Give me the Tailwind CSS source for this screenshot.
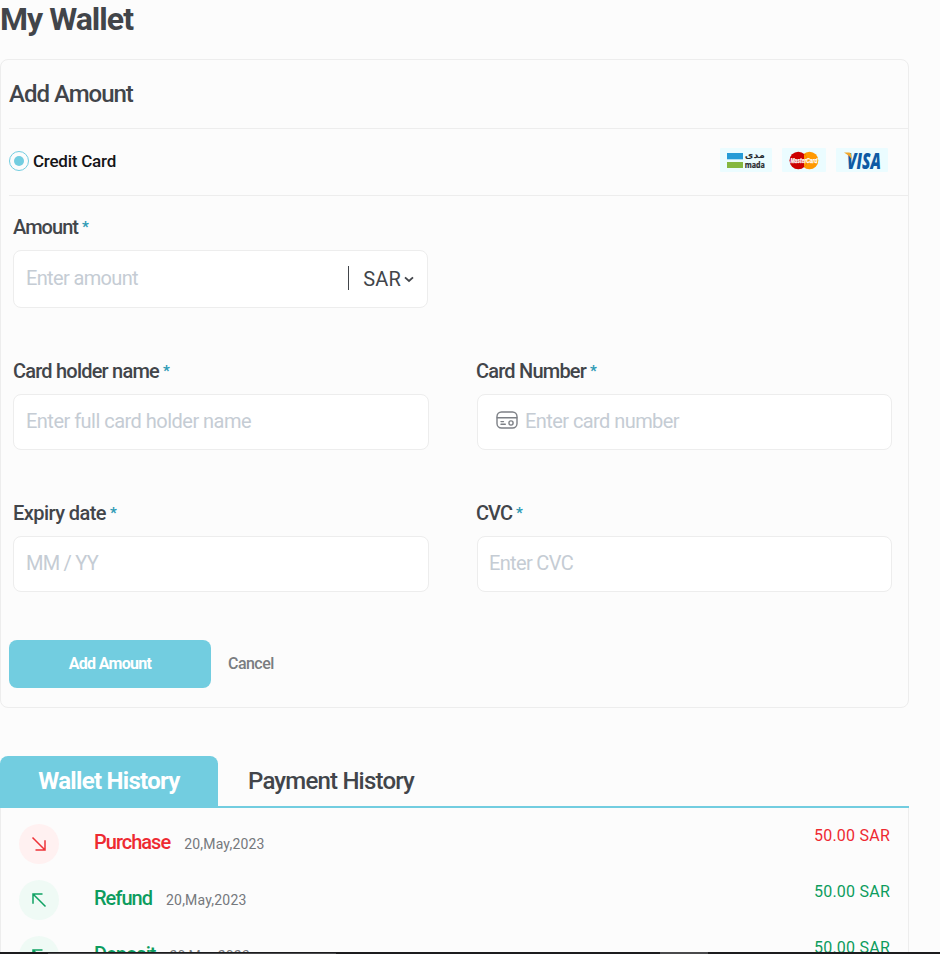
<!DOCTYPE html>
<html lang="en">
<head>
<meta charset="utf-8">
<title>My Wallet</title>
<script src="https://cdn.jsdelivr.net/npm/@tailwindcss/browser@4"></script>
</head>
<body class="bg-[#fcfcfc] font-[Roboto,sans-serif] text-[#42454a]">
<div class="h-[954px] overflow-hidden relative">
  <h1 class="h-[59px] pt-[3px] text-[32px] leading-8 font-bold tracking-[-0.97px] whitespace-nowrap">My Wallet</h1>

  <section class="w-[909px] h-[649px] border border-[#ededed] rounded-lg">
    <div class="ml-2 h-[69px] border-b border-[#ededed] flex items-center">
      <h2 class="text-2xl leading-8 font-medium tracking-[-1px]">Add Amount</h2>
    </div>
    <div class="ml-2 h-[67px] pr-5 pb-[2px] border-b border-[#ededed] flex items-center justify-between">
      <label class="flex items-center gap-1">
        <span class="size-5 rounded-full border border-[#72cde0] flex items-center justify-center"><span class="size-2.5 rounded-full bg-[#72cde0]"></span></span>
        <span class="text-[17px] leading-6 font-medium text-[#151518] tracking-[-0.23px]">Credit Card</span>
      </label>
      <div class="flex gap-[10px] mb-[2px]">
        <svg class="w-[52px] h-6" viewBox="0 0 52 24">
          <rect width="52" height="24" rx="1" fill="#ebfcff"/>
          <rect x="7" y="5" width="16" height="6.3" fill="#259bd6"/>
          <rect x="7" y="14" width="16" height="6" fill="#84b740"/>
          <text x="34.800" y="10.200" text-anchor="middle" direction="rtl" textLength="20" lengthAdjust="spacingAndGlyphs" font-family="DejaVu Sans" font-weight="700" font-size="8.500" fill="#27292d">مدى</text>
          <text x="24.7" y="19.8" textLength="20.2" lengthAdjust="spacingAndGlyphs" font-family="Open Sans" font-weight="700" font-size="8.5" fill="#27292d" stroke="#27292d" stroke-width=".2">mada</text>
        </svg>
        <svg class="w-11 h-6" viewBox="0 0 44 24">
          <rect width="44" height="24" rx="1" fill="#ebfcff"/>
          <circle cx="27.5" cy="12.5" r="8.8" fill="#ff9900"/>
          <circle cx="16.3" cy="12.5" r="8.8" fill="#cc0000"/>
          <path d="M22 5.7a8.8 8.8 0 0 1 0 13.6" fill="#ff9900"/>
          <text x="8.5" y="15" textLength="27" lengthAdjust="spacingAndGlyphs" font-family="Liberation Sans" font-style="italic" font-weight="700" font-size="6.4" fill="#fff" stroke="#fff" stroke-width=".25">MasterCard</text>
        </svg>
        <svg class="w-[52px] h-6" viewBox="0 0 52 24">
          <rect width="52" height="24" rx="1" fill="#ebfcff"/>
          <text x="11" y="20.500" textLength="34" lengthAdjust="spacingAndGlyphs" font-family="Open Sans" font-style="italic" font-weight="800" font-size="22" fill="#0e5aa4">VISA</text>
          <path d="M8 4.500h5.200q1.500 0 1.800 1.500l.9 5.500Q13 7 8 4.500z" fill="#f2a82c"/>
        </svg>
      </div>
    </div>

    <div class="pl-3 pr-4">
      <div class="w-[415px] pt-[19px]">
        <div class="h-6 mb-[11px] flex items-center gap-[5px] text-xl leading-6 font-medium"><span class="tracking-[-0.96px]">Amount</span><span class="text-[15px] leading-4 font-bold -ml-px text-[#2d9ab5]">*</span></div>
        <div class="h-[58px] bg-white border border-[#ededed] rounded-lg pl-3 pr-3 flex items-center text-xl leading-6">
          <span class="flex-1 text-[#c5ccd4] tracking-[-0.65px] mb-[2px]">Enter amount</span>
          <span class="w-px h-6 bg-[#42454a] mr-[14px] mb-[3px]"></span>
          <span class="tracking-[0.2px]">SAR</span>
          <svg class="w-3 h-3 ml-[2px]" viewBox="0 0 12 12" fill="none" stroke="#42454a" stroke-width="1.800"><path d="M2 4.300l4 3.700 4-3.700"/></svg>
        </div>
      </div>

      <div class="grid grid-cols-[416px_415px] gap-x-12 mt-[51px] gap-y-[51px]">
        <div>
          <div class="h-6 mb-[11px] flex items-center gap-[5px] text-xl leading-6 font-medium"><span class="tracking-[-0.79px]">Card holder name</span><span class="text-[15px] leading-4 font-bold -ml-px text-[#2d9ab5]">*</span></div>
          <div class="h-14 bg-white border border-[#ededed] rounded-lg pl-3 flex items-center text-xl leading-6 text-[#c5ccd4]"><span class="tracking-[-0.52px] mb-[2px]">Enter full card holder name</span></div>
        </div>
        <div class="-ml-px">
          <div class="h-6 mb-[11px] flex items-center gap-[5px] text-xl leading-6 font-medium"><span class="tracking-[-0.79px]">Card Number</span><span class="text-[15px] leading-4 font-bold -ml-px text-[#2d9ab5]">*</span></div>
          <div class="h-14 ml-px bg-white border border-[#ededed] rounded-lg pl-[18px] flex items-center text-xl leading-6 text-[#c5ccd4]">
            <svg class="w-[22px] h-[18px] mr-[7px] mb-[4px]" viewBox="0 0 22 18" fill="none" stroke="#7d8086" stroke-width="1.400" stroke-linecap="round"><rect x="1" y="1" width="20" height="16" rx="4.500"/><path d="M1.200 6.700h19.600M5 10.600h2.500M5 13.300h4.300"/><circle cx="15" cy="12" r="2.100"/></svg>
            <span class="tracking-[-0.57px] mb-[2px]">Enter card number</span>
          </div>
        </div>
        <div>
          <div class="h-6 mb-[11px] flex items-center gap-[5px] text-xl leading-6 font-medium"><span class="tracking-[-0.56px]">Expiry date</span><span class="text-[15px] leading-4 font-bold -ml-px text-[#2d9ab5]">*</span></div>
          <div class="h-14 bg-white border border-[#ededed] rounded-lg pl-3 flex items-center text-xl leading-6 text-[#c5ccd4]"><span class="tracking-[-0.76px] mb-[2px]">MM / YY</span></div>
        </div>
        <div class="-ml-px">
          <div class="h-6 mb-[11px] flex items-center gap-[5px] text-xl leading-6 font-medium"><span class="tracking-[-0.97px]">CVC</span><span class="text-[15px] leading-4 font-bold -ml-px text-[#2d9ab5]">*</span></div>
          <div class="h-14 ml-px bg-white border border-[#ededed] rounded-lg pl-[11px] flex items-center text-xl leading-6 text-[#c5ccd4]"><span class="tracking-[-0.66px] mb-[2px]">Enter CVC</span></div>
        </div>
      </div>
    </div>

    <div class="mt-12 ml-2 flex items-center gap-[17px]">
      <button class="w-[202px] h-12 rounded-lg bg-[#72cde0] text-white font-bold text-base tracking-[-0.7px]">Add Amount</button>
      <button class="text-[#7a7d80] font-medium text-base tracking-[-0.55px]">Cancel</button>
    </div>
  </section>

  <nav class="mt-12 w-[909px] h-[52px] border-b-2 border-[#72cde0] flex text-2xl leading-[50px]">
    <div class="w-[218px] h-[50px] rounded-t-lg bg-[#72cde0] text-white font-bold text-center tracking-[-0.7px]">Wallet History</div>
    <div class="ml-[30px] font-medium tracking-[-0.8px]">Payment History</div>
  </nav>

  <section class="w-[909px] h-[200px] border-x border-[#ededed] pt-4 pl-[18px] pr-[18px] flex flex-col gap-4">
    <div class="h-10 shrink-0 flex">
      <span class="size-10 rounded-full bg-[#fff1f1] flex items-center justify-center"><svg class="size-4" viewBox="0 0 16 16" fill="none" stroke="#ee3338" stroke-width="1.500"><path d="M1.500 1.500l12.500 12.500M14 4.200V14H4.500"/></svg></span>
      <span class="ml-[35px] mt-[6px] text-xl leading-6 font-medium text-[#ee2a31] tracking-[-1px]">Purchase</span>
      <span class="ml-[14px] mt-[10px] text-sm leading-5 text-[#75787c] tracking-[0.2px]">20,May,2023</span>
      <span class="ml-auto text-base leading-6 text-[#ee2a31] tracking-[0.23px]">50.00 SAR</span>
    </div>
    <div class="h-10 shrink-0 flex">
      <span class="size-10 rounded-full bg-[#effaf5] flex items-center justify-center"><svg class="size-4" viewBox="0 0 16 16" fill="none" stroke="#0fa263" stroke-width="1.500"><path d="M14.500 14.500L2 2M2 11.800V2h9.500"/></svg></span>
      <span class="ml-[35px] mt-[6px] text-xl leading-6 font-medium text-[#0d9c5e] tracking-[-0.98px]">Refund</span>
      <span class="ml-[14px] mt-[10px] text-sm leading-5 text-[#75787c] tracking-[0.2px]">20,May,2023</span>
      <span class="ml-auto text-base leading-6 text-[#0d9c5e] tracking-[0.23px]">50.00 SAR</span>
    </div>
    <div class="h-10 shrink-0 flex">
      <span class="size-10 rounded-full bg-[#effaf5] flex items-center justify-center"><svg class="size-4" viewBox="0 0 16 16" fill="none" stroke="#0fa263" stroke-width="1.500"><path d="M14.500 14.500L2 2M2 11.800V2h9.500"/></svg></span>
      <span class="ml-[35px] mt-[6px] text-xl leading-6 font-medium text-[#0d9c5e] tracking-[-1px]">Deposit</span>
      <span class="ml-[14px] mt-[10px] text-sm leading-5 text-[#75787c] tracking-[0.2px]">20,May,2023</span>
      <span class="ml-auto text-base leading-6 text-[#0d9c5e] tracking-[0.23px]">50.00 SAR</span>
    </div>
  </section>

  <div class="absolute left-0 bottom-0 w-full h-[2px] bg-[#1c1c1e] flex">
    <span class="ml-12 w-[288px] h-px mt-px bg-[#4a4a4c]"></span>
    <span class="ml-[324px] w-12 h-[2px] bg-[#4a4a4c]"></span>
  </div>
</div>
</body>
</html>
